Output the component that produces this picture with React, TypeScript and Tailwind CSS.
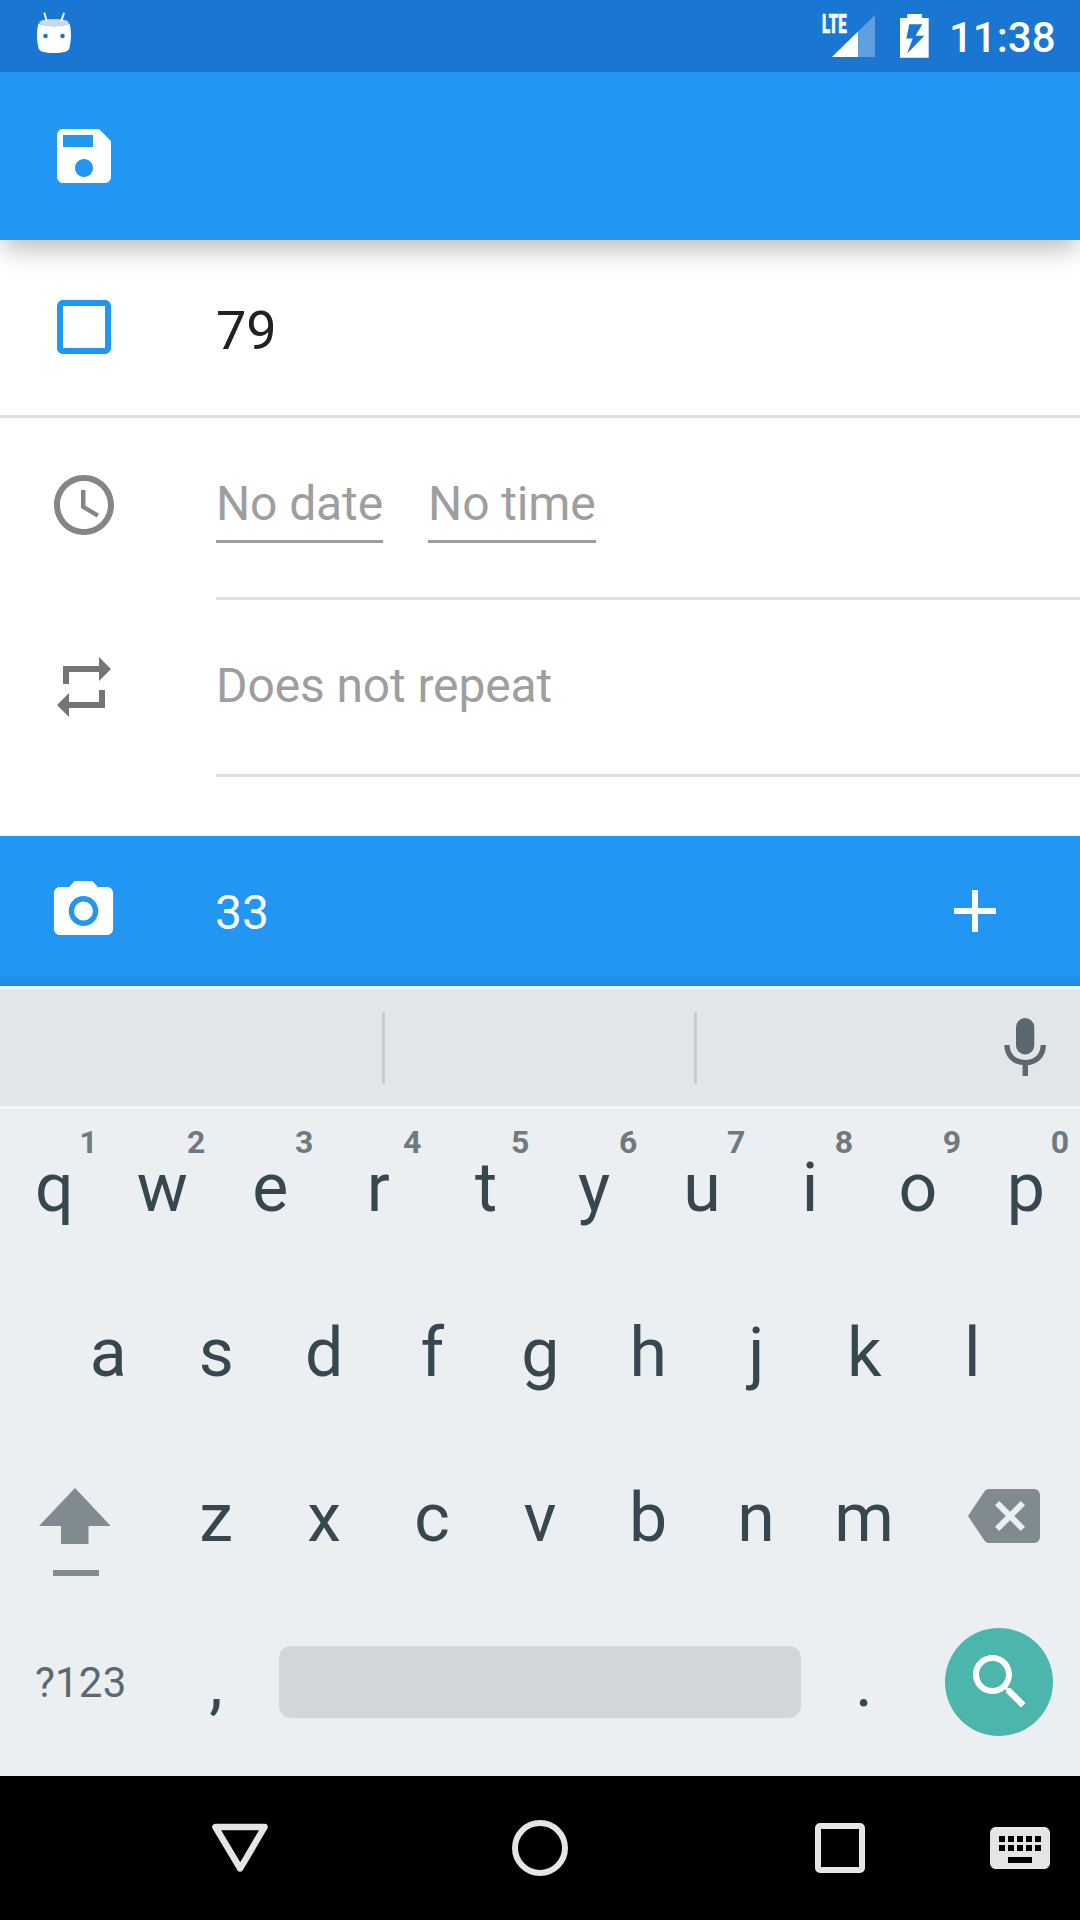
import type { ReactNode } from "react";

function Icon({ d, className = "" }: { d: string; className?: string }) {
  return (
    <svg viewBox="0 0 24 24" preserveAspectRatio="none" className={`block size-[72px] shrink-0 fill-current ${className}`}>
      <path d={d} />
    </svg>
  );
}

const PATHS = {
  save: "M17 3H5c-1.11 0-2 .9-2 2v14c0 1.1.89 2 2 2h14c1.1 0 2-.9 2-2V7l-4-4zm-5 16c-1.66 0-3-1.34-3-3s1.34-3 3-3 3 1.34 3 3-1.34 3-3 3zm3-10H5V5h10v4z",
  checkbox: "M19 5v14H5V5h14m0-2H5c-1.1 0-2 .9-2 2v14c0 1.1.9 2 2 2h14c1.1 0 2-.9 2-2V5c0-1.100-.9-2-2-2z",
  clock:
    "M11.99 2C6.470 2 2 6.480 2 12s4.470 10 9.990 10C17.520 22 22 17.520 22 12S17.520 2 11.990 2zM12 20c-4.420 0-8-3.580-8-8s3.580-8 8-8 8 3.580 8 8-3.580 8-8 8zM12.500 7H11v6l5.250 3.150.75-1.230-4.500-2.670z",
  repeat: "M7 7h10v3l4-4-4-4v3H5v6h2V7zm10 10H7v-3l-4 4 4 4v-3h12v-6h-2v4z",
  camera:
    "M12 8.800a3.200 3.200 0 1 0 0 6.400a3.200 3.200 0 1 0 0-6.400zM9 2L7.170 4H4c-1.100 0-2 .9-2 2v12c0 1.100.9 2 2 2h16c1.100 0 2-.9 2-2V6c0-1.100-.9-2-2-2h-3.170L15 2H9zm3 15c-2.760 0-5-2.240-5-5s2.240-5 5-5 5 2.240 5 5-2.240 5-5 5z",
  plus: "M19 13h-6v6h-2v-6H5v-2h6V5h2v6h6v2z",
  backspace:
    "M22 3H7c-.69 0-1.230.35-1.590.88L0 12l5.410 8.110c.36.53.9.89 1.590.89h15c1.100 0 2-.9 2-2V5c0-1.100-.9-2-2-2zm-3 12.590L17.590 17 14 13.410 10.410 17 9 15.590 12.590 12 9 8.410 10.410 7 14 10.590 17.590 7 19 8.410 15.410 12 19 15.590z",
  search:
    "M15.500 14h-.79l-.28-.27C15.410 12.590 16 11.110 16 9.500 16 5.910 13.090 3 9.500 3S3 5.910 3 9.500 5.910 16 9.500 16c1.610 0 3.090-.59 4.230-1.570l.27.28v.79l5 4.990L20.490 19l-4.990-5zm-6 0C7.010 14 5 11.990 5 9.500S7.010 5 9.500 5 14 7.010 14 9.500 11.990 14 9.500 14z",
  keyboard:
    "M20 5H4c-1.100 0-1.990.9-1.990 2L2 17c0 1.100.9 2 2 2h16c1.100 0 2-.9 2-2V7c0-1.100-.9-2-2-2zm-9 3h2v2h-2V8zm0 3h2v2h-2v-2zM8 8h2v2H8V8zm0 3h2v2H8v-2zm-1 2H5v-2h2v2zm0-3H5V8h2v2zm9 7H8v-2h8v2zm0-4h-2v-2h2v2zm0-3h-2V8h2v2zm3 3h-2v-2h2v2zm0-3h-2V8h2v2z",
};

function StatusBar() {
  return (
    <header className="relative z-20 flex h-[72px] items-start bg-[#1976d2] text-white">
      <svg viewBox="0 0 72 72" className="ml-[18px] block size-[72px]">
        <path d="M20.500 23.500C26 27 46 27 51.500 23.500C53.500 29 53.500 41 51.300 48.500C50.500 51.500 45 53 36 53S21.500 51.500 20.700 48.500C18.500 41 18.500 29 20.500 23.500z" fill="#fff" />
        <ellipse cx="36" cy="22.800" rx="14.800" ry="3.900" fill="#c6daf4" />
        <path d="M26.500 13.500L28.500 20.500M45.800 13.500L43.500 20.500" stroke="#fff" strokeWidth="1.900" strokeLinecap="round" />
        <circle cx="27.500" cy="36" r="2.300" fill="#1976d2" />
        <circle cx="44.500" cy="36" r="2.300" fill="#1976d2" />
      </svg>
      <div className="ml-auto flex">
        <div className="relative h-[72px] w-[57px]">
          <svg viewBox="0 0 57 72" className="block h-[72px] w-[57px]">
            <path d="M54 15V57H11z" fill="#fff" fillOpacity=".3" />
            <path d="M37 31.500V57H11z" fill="#fff" />
          </svg>
          <span className="absolute left-px top-[11px] origin-left scale-x-[0.58] text-[26px] leading-[26px] font-black [-webkit-text-stroke:0.6px_white]">
            LTE
          </span>
        </div>
        <svg viewBox="0 0 48 72" className="ml-[11px] block h-[72px] w-12">
          <path fillRule="evenodd" fill="#fff" d="M18.300 14H33V18H39.700V57.800H11V18H18.300zM20.300 24.300L17.300 38.500H23.700L18.200 53.500L35.300 35.800H26.500L33.300 24.300z" />
        </svg>
        <span className="ml-[12px] mr-[24.500px] mt-[8px] text-[42px] leading-[60px] font-medium">11:38</span>
      </div>
    </header>
  );
}

function Row({ icon, children, className }: { icon: ReactNode; children: ReactNode; className: string }) {
  return (
    <section className={`flex items-center pl-12 ${className}`}>
      {icon}
      <div className="ml-24 flex-1">{children}</div>
    </section>
  );
}

function TaskForm() {
  return (
    <main className="flex h-[596px] flex-col bg-white text-[48px] leading-[60px] tracking-[-0.12px] text-[#9e9e9e]">
      <section className="flex h-[178px] border-b-[3px] border-[#e0e0e0] pl-12">
        <Icon d={PATHS.checkbox} className="mt-[51px] text-[#2196f3]" />
        <span className="ml-24 mt-[61px] text-[54px] text-[#212121]">79</span>
      </section>
      <section className="flex h-[182px] pl-12">
        <Icon d={PATHS.clock} className="mt-[51px] text-[#858585]" />
        <div className="ml-24 flex flex-1 items-start gap-[45px] border-b-[3px] border-[#e0e0e0] pt-[56px]">
          <span className="h-[69px] border-b-[3px] border-[#9e9e9e]">No date</span>
          <span className="h-[69px] border-b-[3px] border-[#9e9e9e]">No time</span>
        </div>
      </section>
      <section className="flex h-[177px] pl-12">
        <Icon d={PATHS.repeat} className="mt-[51px] text-[#757575]" />
        <div className="ml-24 flex-1 border-b-[3px] border-[#e0e0e0] pt-[56px]">Does not repeat</div>
      </section>
    </main>
  );
}

function Key({ label, hint }: { label: string; hint?: string }) {
  return (
    <div className="relative w-[108px] pt-[39px] text-center text-[68px] leading-[80px] text-[#37474f]">
      {label}
      {hint && (
        <span className="absolute right-0 top-[13px] w-10 text-[32px] leading-10 font-bold text-[#6f7a80]">{hint}</span>
      )}
    </div>
  );
}

function Keyboard() {
  return (
    <div className="h-[790px] bg-[#eceff1]">
      <div className="flex h-[123px] items-start border-y-[3px] border-t-[#f0f2f3] border-b-[#f5f7fa] bg-[#e2e6e9] bg-clip-padding">
        <div className="mt-[23px] h-[72px] w-[385px] border-r-[3px] border-[#c9cdd0]" />
        <div className="mt-[23px] h-[72px] w-[312px] border-r-[3px] border-[#c9cdd0]" />
        <svg viewBox="0 0 42 58" className="ml-auto mr-[34px] mt-[29px] block h-[58px] w-[42px]">
          <rect x="12" y="0" width="18.300" height="36.500" rx="9.150" fill="#5a6970" />
          <path d="M3 27C3 38 11 44.600 21.200 44.600S39.300 38 39.300 27M21.300 44V58" fill="none" stroke="#5a6970" strokeWidth="5.400" />
        </svg>
      </div>
      <div className="flex h-[165px] pl-[0.4px]">
        {[..."qwertyuiop"].map((k, i) => (
          <Key key={k} label={k} hint={String((i + 1) % 10)} />
        ))}
      </div>
      <div className="flex h-[165px] justify-center pl-[0.6px]">
        {[..."asdfghjkl"].map((k) => (
          <Key key={k} label={k} />
        ))}
      </div>
      <div className="flex h-[165px]">
        <div className="w-[162px] pl-[39px] pt-[49px]">
          <svg viewBox="0 0 72 88" className="block h-[88px] w-[72px] fill-[#808b8f]">
            <path d="M36 0L71.700 38H49.500V56H22V38H0zM14 82H60V88H14z" />
          </svg>
        </div>
        {[..."zxcvbnm"].map((k) => (
          <Key key={k} label={k} />
        ))}
        <div className="w-[162px] pl-[50px] pt-[41px]">
          <Icon d={PATHS.backspace} className="text-[#808b8f]" />
        </div>
      </div>
      <div className="flex h-[165px]">
        <span className="w-[162px] pl-[35px] pt-[49px] text-[42px] leading-[60px] tracking-[0.2px] text-[#5a6970]">?123</span>
        <Key label="," />
        <div className="mx-[9px] mt-[42px] h-[72px] w-[522px] rounded-xl bg-[#d1d6d9]" />
        <Key label="." />
        <div className="ml-[27px] mt-6 size-[108px] rounded-full bg-[#4db6ac] pl-[19px] pt-[18px] text-white">
          <Icon d={PATHS.search} />
        </div>
      </div>
    </div>
  );
}

function NavBar() {
  return (
    <nav className="flex h-36 items-center bg-black pl-[90px] text-[#e5e5e5]">
      <div className="flex w-[300px] justify-center">
        <svg viewBox="0 0 60 60" className="block size-[60px]">
          <path d="M5.400 9H54.600L30.200 50.500z" fill="none" stroke="currentColor" strokeWidth="6.400" strokeLinejoin="round" />
        </svg>
      </div>
      <div className="flex w-[300px] justify-center">
        <div className="size-14 rounded-full border-[6px] border-current" />
      </div>
      <div className="flex w-[300px] justify-center">
        <div className="size-[50px] rounded-[5px] border-[6px] border-current" />
      </div>
      <Icon d={PATHS.keyboard} className="-ml-[6px]" />
    </nav>
  );
}

export default function App() {
  return (
    <div className="flex h-[1920px] w-[1080px] flex-col overflow-hidden [font-family:Roboto,sans-serif]">
      <StatusBar />
      <div className="relative z-10 flex h-[168px] items-center bg-[#2196f3] pl-12 text-white shadow-[0_12px_24px_-3px_rgba(0,0,0,0.27)]">
        <Icon d={PATHS.save} />
      </div>
      <TaskForm />
      <Row
        icon={<Icon d={PATHS.camera} className="w-[71px]" />}
        className="h-[150px] bg-[#2196f3] bg-linear-to-b from-transparent from-[92%] to-black/8 text-[48px] leading-[60px] text-white"
      >
        <div className="flex items-center justify-between pr-[69px]">
          <span className="mt-[4px]">33</span>
          <Icon d={PATHS.plus} />
        </div>
      </Row>
      <Keyboard />
      <NavBar />
    </div>
  );
}
